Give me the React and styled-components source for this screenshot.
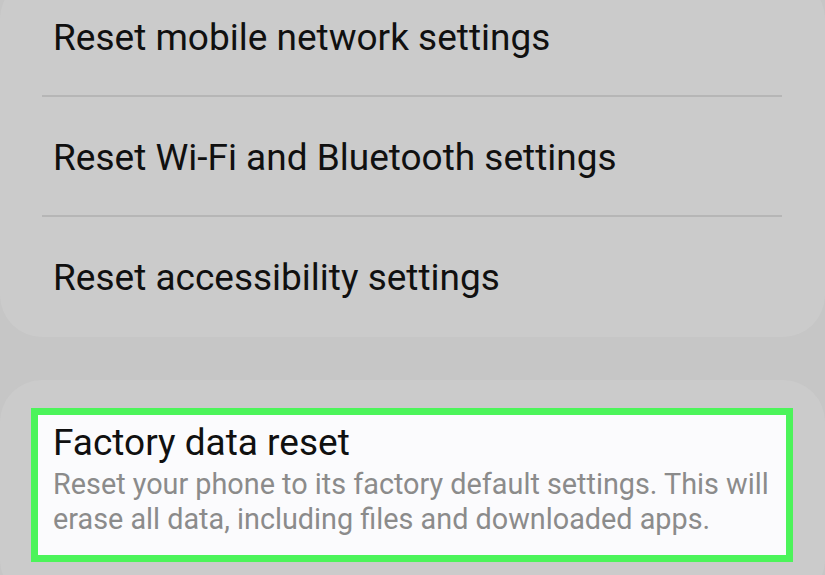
import React from 'react'
import styled, { createGlobalStyle } from 'styled-components'

const GlobalStyle = createGlobalStyle`
  html, body {
    margin: 0;
    padding: 0;
    background: #c6c6c6;
    overflow: hidden;
  }
  body {
    font-family: Roboto, "Noto Sans", sans-serif;
  }
`

const Page = styled.div`
  width: 825px;
  height: 620px;
  margin-top: -23px;
  display: flex;
  flex-direction: column;
  gap: 43px;
`

const Card = styled.div`
  background: #cbcbcb;
  border-radius: 42px;
  padding: ${p => p.$pad || '0'};
  flex: ${p => (p.$grow ? 1 : 'none')};
`

const Row = styled.div`
  height: 120px;
  display: flex;
  align-items: center;
  padding: 0 53px;
  font-size: 37px;
  color: #101010;
  position: relative;
  ${p => p.$divider && `
    &::after {
      content: '';
      position: absolute;
      left: 42px;
      right: 43px;
      bottom: 0;
      height: 2px;
      background: #b6b6b6;
    }
  `}
`

const Highlight = styled.div`
  margin: 0 32px 0 31px;
  border: 7px solid #4cf45a;
  background: #fbfbfd;
  padding: 5px 14px 18px 15px;
`

const Title = styled.div`
  font-size: 37px;
  color: #101010;
  line-height: 46px;
`

const Desc = styled.div`
  font-size: 28.8px;
  color: #8b8b8b;
  line-height: 35px;
  margin-top: 1px;
`

export default function App() {
  return (
    <>
      <GlobalStyle />
      <Page>
        <Card>
          <Row $divider>Reset mobile network settings</Row>
          <Row $divider>Reset Wi-Fi and Bluetooth settings</Row>
          <Row>Reset accessibility settings</Row>
        </Card>
        <Card $pad="28px 0 40px" $grow>
          <Highlight>
            <Title>Factory data reset</Title>
            <Desc>
              Reset your phone to its factory default settings. This will
              erase all data, including files and downloaded apps.
            </Desc>
          </Highlight>
        </Card>
      </Page>
    </>
  )
}
